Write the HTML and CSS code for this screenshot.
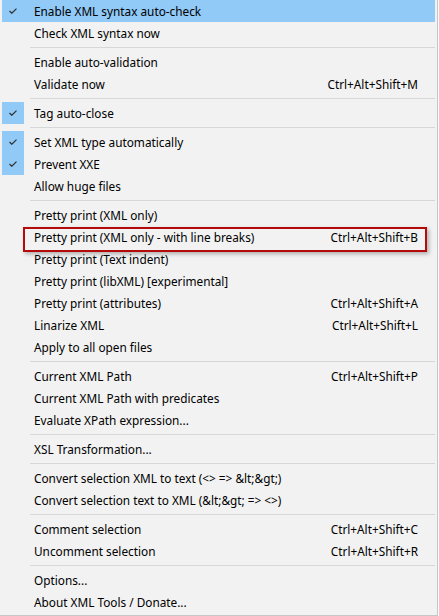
FILE: index.html
```html
<!DOCTYPE html>
<html>
<head>
<meta charset="utf-8">
<link rel="stylesheet" href="styles.css">
</head>
<body>
<div class="menu">
  <div class="item hot"><span class="chk on"><svg viewBox="0 0 8 6" width="8" height="6"><path d="M0.5 3 L2.8 5.2 L7.5 0.6" fill="none" stroke="#333" stroke-width="1.3"/></svg></span><span class="label">Enable XML syntax auto-check</span><span class="key"></span></div>
  <div class="item"><span class="chk"></span><span class="label">Check XML syntax now</span><span class="key"></span></div>
  <div class="sep"></div>
  <div class="item"><span class="chk"></span><span class="label">Enable auto-validation</span><span class="key"></span></div>
  <div class="item"><span class="chk"></span><span class="label">Validate now</span><span class="key">Ctrl+Alt+Shift+M</span></div>
  <div class="sep"></div>
  <div class="item"><span class="chk on"><svg viewBox="0 0 8 6" width="8" height="6"><path d="M0.5 3 L2.8 5.2 L7.5 0.6" fill="none" stroke="#333" stroke-width="1.3"/></svg></span><span class="label">Tag auto-close</span><span class="key"></span></div>
  <div class="sep"></div>
  <div class="item"><span class="chk on"><svg viewBox="0 0 8 6" width="8" height="6"><path d="M0.5 3 L2.8 5.2 L7.5 0.6" fill="none" stroke="#333" stroke-width="1.3"/></svg></span><span class="label">Set XML type automatically</span><span class="key"></span></div>
  <div class="item"><span class="chk on"><svg viewBox="0 0 8 6" width="8" height="6"><path d="M0.5 3 L2.8 5.2 L7.5 0.6" fill="none" stroke="#333" stroke-width="1.3"/></svg></span><span class="label">Prevent XXE</span><span class="key"></span></div>
  <div class="item"><span class="chk"></span><span class="label">Allow huge files</span><span class="key"></span></div>
  <div class="sep"></div>
  <div class="item"><span class="chk"></span><span class="label">Pretty print (XML only)</span><span class="key"></span></div>
  <div class="item marked"><span class="chk"></span><span class="label">Pretty print (XML only - with line breaks)</span><span class="key">Ctrl+Alt+Shift+B</span></div>
  <div class="item"><span class="chk"></span><span class="label">Pretty print (Text indent)</span><span class="key"></span></div>
  <div class="item"><span class="chk"></span><span class="label">Pretty print (libXML) [experimental]</span><span class="key"></span></div>
  <div class="item"><span class="chk"></span><span class="label">Pretty print (attributes)</span><span class="key">Ctrl+Alt+Shift+A</span></div>
  <div class="item"><span class="chk"></span><span class="label">Linarize XML</span><span class="key">Ctrl+Alt+Shift+L</span></div>
  <div class="item"><span class="chk"></span><span class="label">Apply to all open files</span><span class="key"></span></div>
  <div class="sep"></div>
  <div class="item"><span class="chk"></span><span class="label">Current XML Path</span><span class="key">Ctrl+Alt+Shift+P</span></div>
  <div class="item"><span class="chk"></span><span class="label">Current XML Path with predicates</span><span class="key"></span></div>
  <div class="item"><span class="chk"></span><span class="label">Evaluate XPath expression...</span><span class="key"></span></div>
  <div class="sep"></div>
  <div class="item"><span class="chk"></span><span class="label">XSL Transformation...</span><span class="key"></span></div>
  <div class="sep"></div>
  <div class="item"><span class="chk"></span><span class="label">Convert selection XML to text (&lt;&gt; =&gt; &amp;lt;&amp;gt;)</span><span class="key"></span></div>
  <div class="item"><span class="chk"></span><span class="label">Convert selection text to XML (&amp;lt;&amp;gt; =&gt; &lt;&gt;)</span><span class="key"></span></div>
  <div class="sep"></div>
  <div class="item"><span class="chk"></span><span class="label">Comment selection</span><span class="key">Ctrl+Alt+Shift+C</span></div>
  <div class="item"><span class="chk"></span><span class="label">Uncomment selection</span><span class="key">Ctrl+Alt+Shift+R</span></div>
  <div class="sep"></div>
  <div class="item"><span class="chk"></span><span class="label">Options...</span><span class="key"></span></div>
  <div class="item"><span class="chk"></span><span class="label">About XML Tools / Donate...</span><span class="key"></span></div>
</div>
</body>
</html>
```
FILE: styles.css
```css
html, body {
  margin: 0;
  padding: 0;
  background: #ffffff;
}
.menu {
  box-sizing: border-box;
  width: 438px;
  height: 616px;
  padding: 0 2px 0 2px;
  background: #f2f2f2;
  border-right: 1px solid #c6c6c6;
  border-bottom: 1px solid #c6c6c6;
  font-family: "Noto Sans", "Noto Sans CJK KR", sans-serif;
  font-size: 11.8px;
  color: #000;
  overflow: hidden;
}
.item {
  display: grid;
  grid-template-columns: 22px 1fr auto;
  height: 22px;
  align-items: center;
  position: relative;
}
.item.hot {
  background: #91c9f7;
}
.chk {
  height: 22px;
  display: flex;
  align-items: center;
  justify-content: center;
}
.chk.on {
  background: #91c9f7;
}
.chk svg {
  display: block;
}
.label {
  padding-left: 10px;
  padding-bottom: 1px;
  white-space: nowrap;
}
.key {
  padding-right: 17px;
  padding-bottom: 1px;
  white-space: nowrap;
}
.sep {
  height: 1px;
  margin: 3px 0 3px 28px;
  background: #d7d7d7;
}
.marked::after {
  content: "";
  position: absolute;
  left: 21px;
  right: 8px;
  top: 1px;
  bottom: -4px;
  border: 2px solid #b50a0a;
  box-shadow: 2px 2px 4px rgba(0, 0, 0, 0.28);
  pointer-events: none;
}
```
